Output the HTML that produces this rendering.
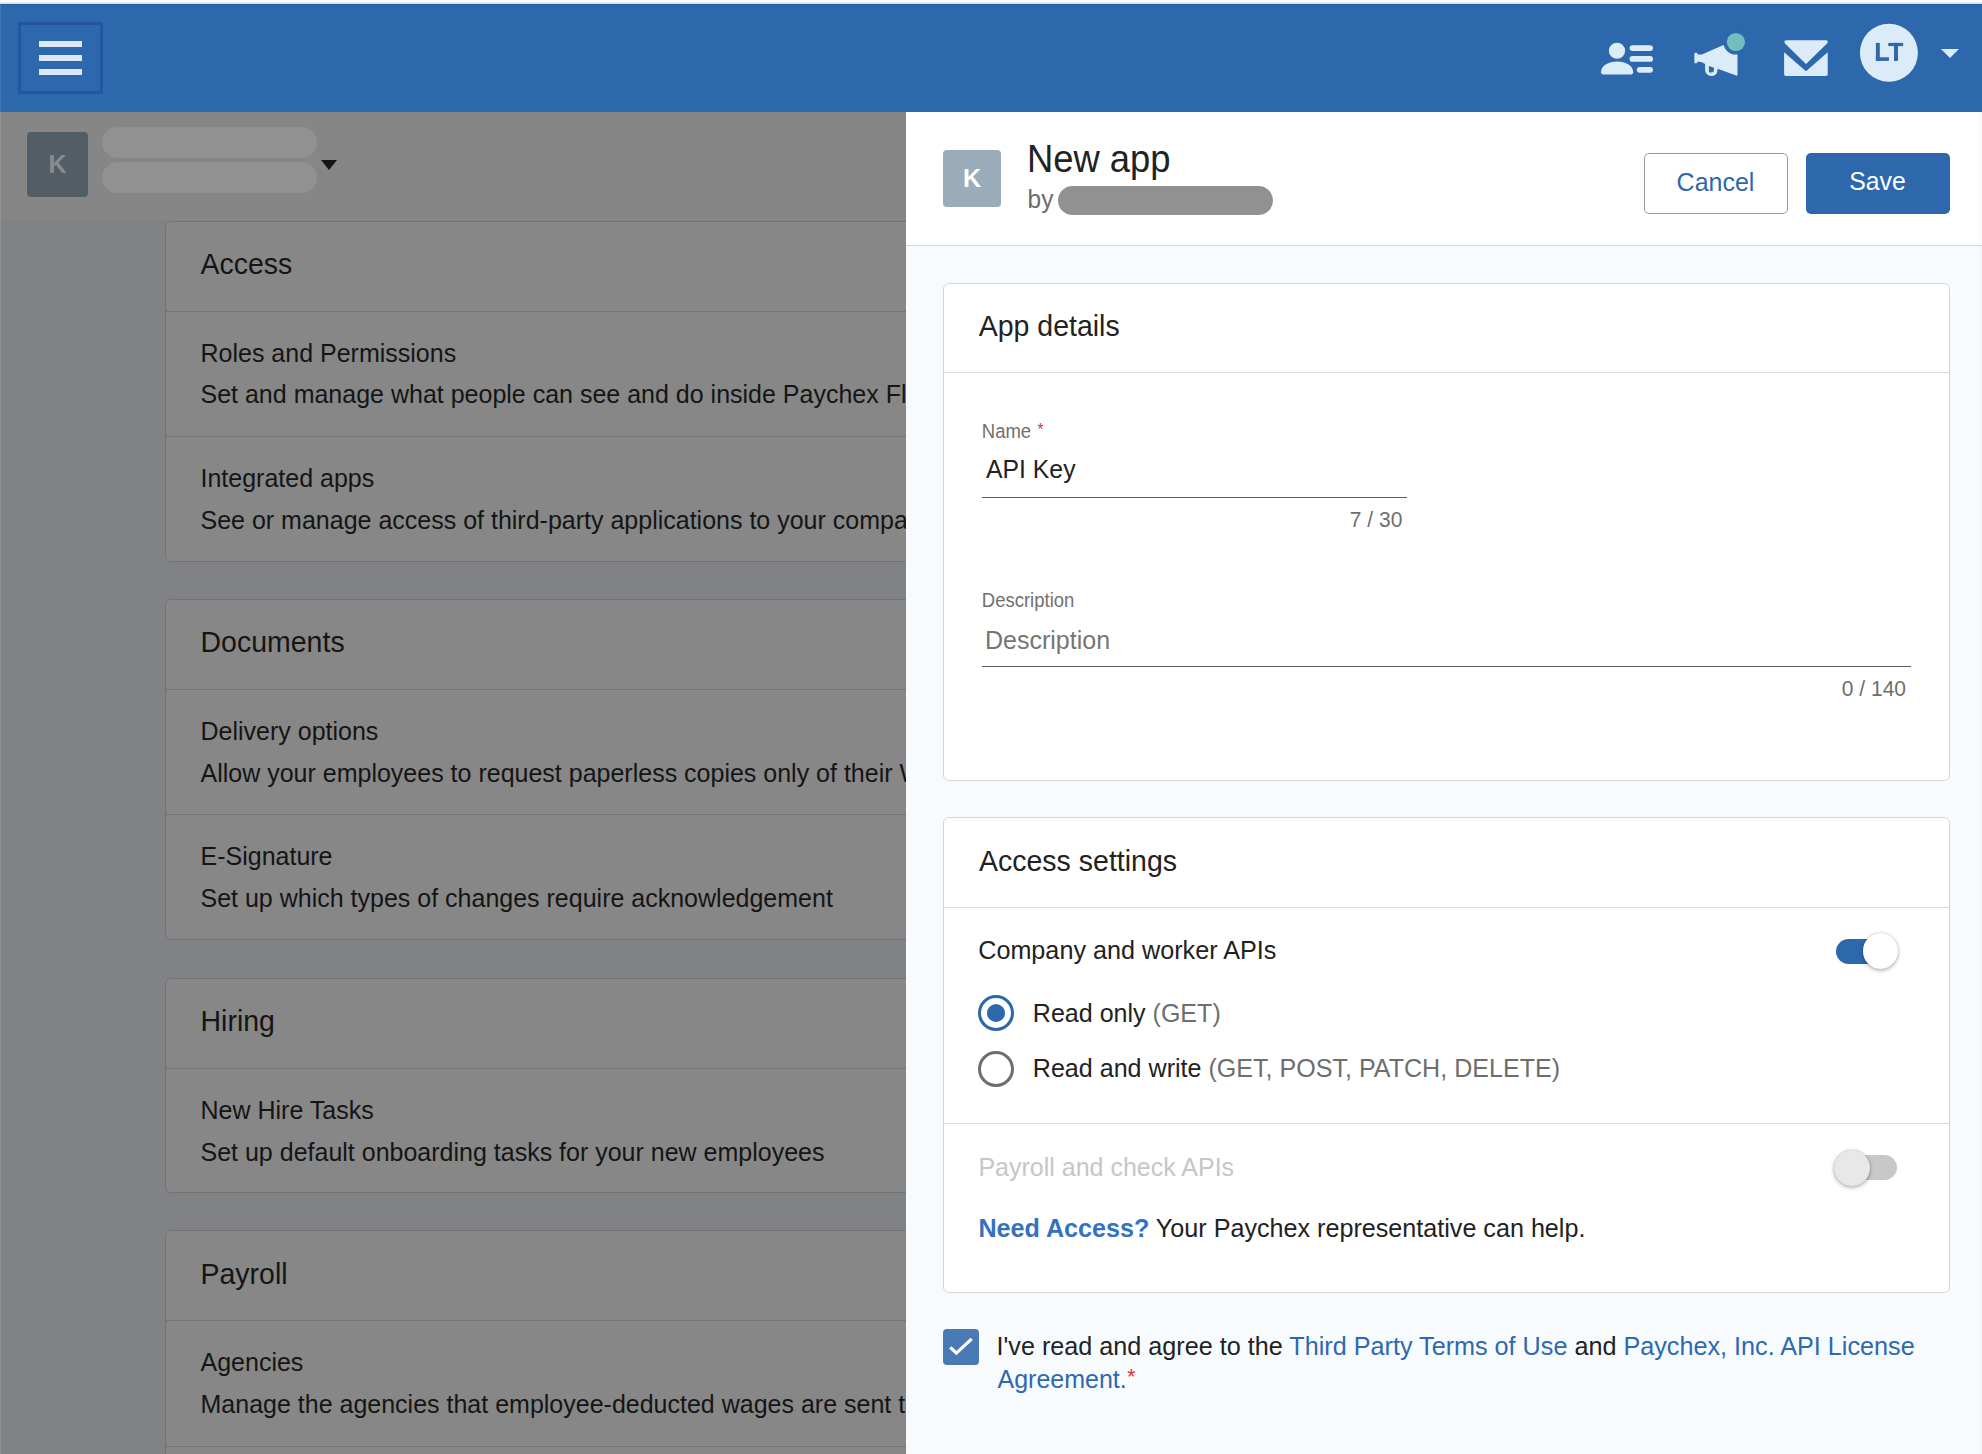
<!DOCTYPE html>
<html><head><meta charset="utf-8">
<style>
*{margin:0;padding:0;box-sizing:border-box}
html,body{width:1982px;height:1454px;overflow:hidden;background:#fff;font-family:"Liberation Sans",sans-serif}
.t{position:absolute;white-space:nowrap;line-height:1}
.a{position:absolute}
#topstrip{position:absolute;left:0;top:2px;width:1982px;height:2px;background:#e8e6e2}
#hdr{position:absolute;left:0;top:4px;width:1982px;height:107.6px;background:#2d68ad;border-top:1px solid #235ba4}
#ham{position:absolute;left:18px;top:22px;width:85px;height:72px;border:3px solid #2456a0}
#ham i{position:absolute;left:18px;width:43px;height:6px;background:#dce8f8}
#left{position:absolute;left:0;top:111.6px;width:906px;height:1343px;background:#818285;overflow:hidden}
#cobar{position:absolute;left:0;top:0;width:906px;height:108px;background:#868686}
.lcard{position:absolute;left:165px;width:900px;background:#878787;border:1px solid #737373;border-radius:6px}
.ldiv{position:absolute;left:165.5px;width:800px;height:1px;background:#747474}
#panel{position:absolute;left:906px;top:111.6px;width:1076px;height:1343px;background:#f8fbfe;overflow:hidden}
#phead{position:absolute;left:906px;top:111.6px;width:1076px;height:134.4px;background:#fff;border-bottom:1px solid #d8d8d8}
.pcard{position:absolute;left:943px;width:1007px;background:#fff;border:1px solid #d6d6d6;border-radius:6px}
.pdiv{position:absolute;left:944px;width:1005px;height:1px;background:#dadada}
.uline{position:absolute;height:1.4px;background:#5c5c5c}
.lnk{color:#2c69b0}
.radio{position:absolute;width:36px;height:36px;border-radius:50%;border:3px solid #6e6e6e;background:#fff}
.track{position:absolute;left:1836px;width:61px;height:24.8px;border-radius:12.4px}
.knob{position:absolute;width:35.5px;height:35.5px;border-radius:50%;box-shadow:0 1.5px 4px rgba(0,0,0,.3), 0 0 1px rgba(0,0,0,.3)}
</style></head><body>
<div id="topstrip"></div>
<div id="hdr"></div>
<div id="ham"><i style="top:16px"></i><i style="top:30px"></i><i style="top:44px"></i></div>
<svg class="a" style="left:0;top:0" width="1982" height="112" viewBox="0 0 1982 112">
 <g fill="#dcebf8">
  <!-- people -->
  <circle cx="1617" cy="50.75" r="8.1"/>
  <path d="M1601,72.3 C1601,65.8 1608.2,61.5 1617.1,61.5 C1626,61.5 1633.2,65.8 1633.2,72.3 Q1633.2,74.4 1631.2,74.4 L1603,74.4 Q1601,74.4 1601,72.3 Z"/>
  <rect x="1629.6" y="45.2" width="23.4" height="5.8" rx="2.9"/>
  <rect x="1629.6" y="56" width="23.4" height="5.8" rx="2.9"/>
  <rect x="1636.8" y="66.9" width="16.2" height="5.8" rx="2.9"/>
  <!-- megaphone -->
  <path fill-rule="evenodd" d="M1694.4,53.6 Q1694.4,52.7 1695.3,52.7 L1696.9,52.7 L1697.8,54.6 L1701.9,54.6 L1723.5,45.1 L1737.5,45.1 L1737.5,74.8 Q1737.5,76 1736.3,75.6 L1717.6,68.8 L1717.4,71.2 C1717,74.2 1714.5,75.9 1711.3,75.9 C1707.8,75.9 1705.1,73.3 1705.1,69.8 L1705.1,64.1 L1701.9,62.3 L1697.8,61.4 L1696.9,63.3 L1695.3,63.3 Q1694.4,63.3 1694.4,62.4 Z M1708.9,65.9 L1708.9,71.4 Q1708.9,72.4 1710,72.4 L1711.8,72.4 C1713,72.4 1713.9,71.3 1713.9,70 L1713.9,67.8 Z"/>
  <!-- mail -->
  <path d="M1786.2,40.2 L1826,40.2 Q1828.2,40.2 1827.6,42.4 Q1827.3,43.3 1826.5,44 L1806,63.9 L1785.5,44 Q1784.6,43.2 1784.4,42.3 Q1784.1,40.2 1786.2,40.2 Z"/>
  <path d="M1784.1,52.3 L1806,71.2 L1827.7,52.3 L1827.7,74.3 Q1827.7,76 1826,76 L1785.8,76 Q1784.1,76 1784.1,74.3 Z"/>
  <!-- avatar -->
  <circle cx="1888.9" cy="52.8" r="29"/>
  <path d="M1941,49.1 L1958.9,49.1 L1950,58.1 Z"/>
 </g>
 <circle cx="1735.9" cy="42" r="12.6" fill="#2d68ad"/>
 <circle cx="1735.9" cy="42" r="9.1" fill="#72bdbe"/>
</svg>
<svg class="a" style="left:0;top:0" width="1982" height="112" viewBox="0 0 1982 112"><g fill="#2d68ad">
 <rect x="1875.9" y="42.9" width="3.9" height="18"/><rect x="1875.9" y="57.3" width="13" height="3.6"/>
 <rect x="1888.3" y="42.9" width="14.8" height="3.2"/><rect x="1894" y="42.9" width="4" height="18"/></g></svg>

<div id="left">
  <div id="cobar"></div>
  <div class="a" style="left:27px;top:20.5px;width:61px;height:65px;background:#535d65;border-radius:4px"></div>
  <div class="t" style="left:27px;top:20.5px;width:61px;height:65px;line-height:65px;text-align:center;font-size:25px;font-weight:bold;color:#8b8b8b">K</div>
  <div class="a" style="left:102px;top:15.6px;width:215px;height:30.6px;background:#919191;border-radius:16px"></div>
  <div class="a" style="left:102px;top:50.8px;width:215px;height:30.6px;background:#919191;border-radius:16px"></div>
  <div class="a" style="left:321px;top:48.6px;width:0;height:0;border-left:8.6px solid transparent;border-right:8.6px solid transparent;border-top:10.8px solid #151515"></div>
</div>
<div id="leftcontent" style="position:absolute;left:0;top:0;width:906px;height:1454px;overflow:hidden">
<div class="lcard" style="top:220.5px;height:341.0px"></div>
<div class="t " style="left:200.5px;top:250.07px;font-size:28.5px;color:#151515;font-weight:normal;transform:scaleY(1.06);transform-origin:0 24.13px;">Access</div>
<div class="ldiv" style="top:310.5px"></div>
<div class="t " style="left:200.5px;top:340.54px;font-size:25px;color:#151515;font-weight:normal;transform:scaleY(1.06);transform-origin:0 21.16px;">Roles and Permissions</div>
<div class="t " style="left:200.5px;top:382.44px;font-size:25px;color:#151515;font-weight:normal;transform:scaleY(1.06);transform-origin:0 21.16px;">Set and manage what people can see and do inside Paychex Flex</div>
<div class="ldiv" style="top:436.0px"></div>
<div class="t " style="left:200.5px;top:466.04px;font-size:25px;color:#151515;font-weight:normal;transform:scaleY(1.06);transform-origin:0 21.16px;">Integrated apps</div>
<div class="t " style="left:200.5px;top:507.94px;font-size:25px;color:#151515;font-weight:normal;transform:scaleY(1.06);transform-origin:0 21.16px;">See or manage access of third-party applications to your company data</div>
<div class="lcard" style="top:598.9px;height:341.0px"></div>
<div class="t " style="left:200.5px;top:628.47px;font-size:28.5px;color:#151515;font-weight:normal;transform:scaleY(1.06);transform-origin:0 24.13px;">Documents</div>
<div class="ldiv" style="top:688.9px"></div>
<div class="t " style="left:200.5px;top:718.94px;font-size:25px;color:#151515;font-weight:normal;transform:scaleY(1.06);transform-origin:0 21.16px;">Delivery options</div>
<div class="t " style="left:200.5px;top:760.84px;font-size:25px;color:#151515;font-weight:normal;transform:scaleY(1.06);transform-origin:0 21.16px;">Allow your employees to request paperless copies only of their W-2s</div>
<div class="ldiv" style="top:814.4px"></div>
<div class="t " style="left:200.5px;top:844.44px;font-size:25px;color:#151515;font-weight:normal;transform:scaleY(1.06);transform-origin:0 21.16px;">E-Signature</div>
<div class="t " style="left:200.5px;top:886.34px;font-size:25px;color:#151515;font-weight:normal;transform:scaleY(1.06);transform-origin:0 21.16px;">Set up which types of changes require acknowledgement</div>
<div class="lcard" style="top:977.6px;height:215.5px"></div>
<div class="t " style="left:200.5px;top:1007.17px;font-size:28.5px;color:#151515;font-weight:normal;transform:scaleY(1.06);transform-origin:0 24.13px;">Hiring</div>
<div class="ldiv" style="top:1067.6px"></div>
<div class="t " style="left:200.5px;top:1097.64px;font-size:25px;color:#151515;font-weight:normal;transform:scaleY(1.06);transform-origin:0 21.16px;">New Hire Tasks</div>
<div class="t " style="left:200.5px;top:1139.54px;font-size:25px;color:#151515;font-weight:normal;transform:scaleY(1.06);transform-origin:0 21.16px;">Set up default onboarding tasks for your new employees</div>
<div class="lcard" style="top:1230.2px;height:341.0px"></div>
<div class="t " style="left:200.5px;top:1259.77px;font-size:28.5px;color:#151515;font-weight:normal;transform:scaleY(1.06);transform-origin:0 24.13px;">Payroll</div>
<div class="ldiv" style="top:1320.2px"></div>
<div class="t " style="left:200.5px;top:1350.24px;font-size:25px;color:#151515;font-weight:normal;transform:scaleY(1.06);transform-origin:0 21.16px;">Agencies</div>
<div class="t " style="left:200.5px;top:1392.14px;font-size:25px;color:#151515;font-weight:normal;transform:scaleY(1.06);transform-origin:0 21.16px;">Manage the agencies that employee-deducted wages are sent to</div>
<div class="ldiv" style="top:1445.7px"></div>
<div class="t " style="left:200.5px;top:1475.74px;font-size:25px;color:#151515;font-weight:normal;transform:scaleY(1.06);transform-origin:0 21.16px;">Other</div>
<div class="t " style="left:200.5px;top:1517.64px;font-size:25px;color:#151515;font-weight:normal;transform:scaleY(1.06);transform-origin:0 21.16px;">More</div>

</div>

<div id="panel"></div>
<div id="phead"></div>
<div class="a" style="left:943px;top:150px;width:58px;height:57px;background:#9aacba;border-radius:4px"></div>
<div class="t" style="left:943px;top:150px;width:58px;height:57px;line-height:57px;text-align:center;font-size:25px;font-weight:bold;color:#fff">K</div>
<div class="a" style="left:1058.4px;top:185.6px;width:214.3px;height:29.5px;background:#919191;border-radius:15px"></div>
<div class="a" style="left:1644.3px;top:153.2px;width:143.4px;height:60.4px;background:#fff;border:1px solid #9a9a9a;border-radius:5px"></div>
<div class="a" style="left:1806.2px;top:153.2px;width:143.6px;height:60.4px;background:#2d68ad;border-radius:5px"></div>

<div class="pcard" style="top:282.5px;height:498px"></div>
<div class="pdiv" style="top:372px"></div>
<div class="uline" style="left:982px;top:496.8px;width:425px"></div>
<div class="uline" style="left:982px;top:665.8px;width:929px"></div>

<div class="pcard" style="top:817.3px;height:476.1px"></div>
<div class="pdiv" style="top:907px"></div>
<div class="pdiv" style="top:1123px"></div>
<div class="track" style="top:938.9px;background:#2d68ad"></div>
<div class="knob" style="left:1862.8px;top:933.3px;background:#fff"></div>
<div class="radio" style="left:977.9px;top:994.9px;border-color:#2d68ad"><div class="a" style="left:6px;top:6px;width:18px;height:18px;border-radius:50%;background:#2d68ad"></div></div>
<div class="radio" style="left:977.9px;top:1050.9px"></div>
<div class="track" style="top:1155.1px;background:#c8c8c8"></div>
<div class="knob" style="left:1834.2px;top:1150.3px;background:#e8e8e8"></div>

<div class="a" style="left:943px;top:1329px;width:36px;height:36px;background:#4a7ab5;border-radius:4px"></div>
<svg class="a" style="left:943px;top:1329px" width="36" height="36" viewBox="0 0 36 36"><path d="M7.3,18.4 L13.4,24.1 L28.7,9.9" fill="none" stroke="#fff" stroke-width="3.3"/></svg>

<div class="a" style="left:1976px;top:111.6px;width:6px;height:1343px;background:linear-gradient(90deg,rgba(0,0,0,0),rgba(0,0,0,.028))"></div>
<div class="a" style="left:0;top:4px;width:1px;height:1450px;background:rgba(255,255,255,.1)"></div>
<div id="panelcontent" style="position:absolute;left:0;top:0;width:1982px;height:1454px">
<div class="t " style="left:1026.9px;top:142.49px;font-size:36.4px;color:#222;font-weight:normal;transform:scaleY(1.06);transform-origin:0 30.81px;">New app</div>
<div class="t " style="left:1027.6px;top:187.56px;font-size:24.5px;color:#6b6b6b;font-weight:normal;transform:scaleY(1.06);transform-origin:0 20.74px;">by</div>
<div class="t " style="left:978.7px;top:311.67px;font-size:28.5px;color:#222;font-weight:normal;transform:scaleY(1.06);transform-origin:0 24.13px;">App details</div>
<div class="t " style="left:981.8px;top:423.44px;font-size:18.5px;color:#707070;font-weight:normal;transform:scaleY(1.06);transform-origin:0 15.66px;">Name</div>
<div class="t " style="left:1037.6px;top:421.80px;font-size:15px;color:#d0352b;font-weight:normal;transform:scaleY(1.06);transform-origin:0 12.70px;">*</div>
<div class="t " style="left:986.1px;top:457.75px;font-size:24.75px;color:#222;font-weight:normal;transform:scaleY(1.06);transform-origin:0 20.95px;">API Key</div>
<div class="t " style="left:1349.8px;top:509.02px;font-size:21px;color:#6e6e6e;font-weight:normal;transform:scaleY(1.06);transform-origin:0 17.78px;">7 / 30</div>
<div class="t " style="left:981.8px;top:592.24px;font-size:18.5px;color:#707070;font-weight:normal;transform:scaleY(1.06);transform-origin:0 15.66px;">Description</div>
<div class="t " style="left:985px;top:628.34px;font-size:25px;color:#757575;font-weight:normal;transform:scaleY(1.06);transform-origin:0 21.16px;">Description</div>
<div class="t " style="left:1841.8px;top:678.32px;font-size:21px;color:#6e6e6e;font-weight:normal;transform:scaleY(1.06);transform-origin:0 17.78px;">0 / 140</div>
<div class="t " style="left:979px;top:846.67px;font-size:28.5px;color:#222;font-weight:normal;transform:scaleY(1.06);transform-origin:0 24.13px;">Access settings</div>
<div class="t " style="left:978.2px;top:937.97px;font-size:25.2px;color:#222;font-weight:normal;transform:scaleY(1.06);transform-origin:0 21.33px;">Company and worker APIs</div>
<div class="t " style="left:1032.8px;top:1000.80px;font-size:25.05px;color:#222;font-weight:normal;transform:scaleY(1.06);transform-origin:0 21.20px;">Read only <span style="color:#6e6e6e">(GET)</span></div>
<div class="t " style="left:1032.8px;top:1055.97px;font-size:25.08px;color:#222;font-weight:normal;transform:scaleY(1.06);transform-origin:0 21.23px;">Read and write <span style="color:#6e6e6e">(GET, POST, PATCH, DELETE)</span></div>
<div class="t " style="left:978.4px;top:1154.84px;font-size:25px;color:#c6c6c6;font-weight:normal;transform:scaleY(1.06);transform-origin:0 21.16px;">Payroll and check APIs</div>
<div class="t " style="left:978.4px;top:1215.51px;font-size:25.15px;color:#222;font-weight:normal;transform:scaleY(1.06);transform-origin:0 21.29px;"><b style="color:#3371c2">Need Access?</b> Your Paychex representative can help.</div>
<div class="t " style="left:996.5px;top:1333.67px;font-size:25.2px;color:#222;font-weight:normal;transform:scaleY(1.06);transform-origin:0 21.33px;">I've read and agree to the <span class="lnk">Third Party Terms of Use</span> and <span class="lnk">Paychex, Inc. API License</span></div>
<div class="t " style="left:997.5px;top:1366.64px;font-size:25px;color:#222;font-weight:normal;transform:scaleY(1.06);transform-origin:0 21.16px;"><span class="lnk">Agreement.</span><span style="color:#e0302a;font-size:21px;position:relative;top:-4px;left:0.5px">*</span></div>
<div class="t " style="left:1676.6px;top:169.84px;font-size:25px;color:#2d68ad;font-weight:normal;transform:scaleY(1.06);transform-origin:0 21.16px;">Cancel</div>
<div class="t " style="left:1849.2px;top:170.01px;font-size:24.8px;color:#fff;font-weight:normal;transform:scaleY(1.06);transform-origin:0 20.99px;">Save</div>

</div>
</body></html>
